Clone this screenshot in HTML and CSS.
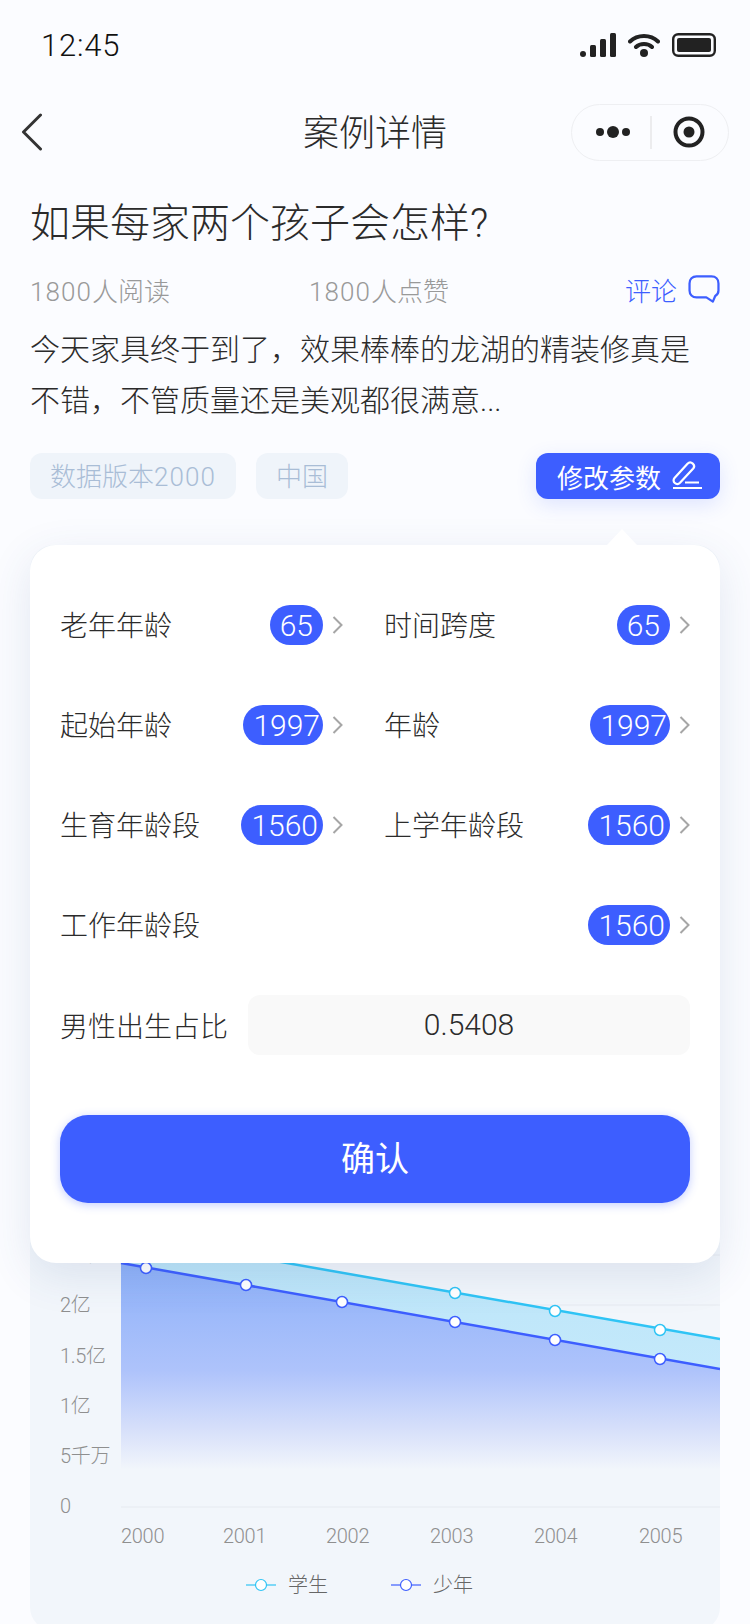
FILE: index.html
```html
<!DOCTYPE html>
<html lang="zh-CN">
<head>
    <meta charset="UTF-8">
    <meta name="viewport" content="width=device-width, initial-scale=1.0">
    <title>案例详情</title>
    <link rel="stylesheet" href="styles.css">
</head>
<body>
    <div class="page">
        <div class="status-bar">
            <span class="time">12:45</span>
            <div class="status-icons">
                <svg width="36" height="24" viewBox="0 0 36 24">
                    <rect x="0" y="18" width="6" height="6" rx="3" fill="#222"/>
                    <rect x="10" y="12" width="6" height="12" rx="1.5" fill="#222"/>
                    <rect x="20" y="6" width="6" height="18" rx="1.5" fill="#222"/>
                    <rect x="30" y="0" width="6" height="24" rx="1.5" fill="#222"/>
                </svg>
                <svg width="32" height="24" viewBox="0 0 32 24">
                    <path d="M2 8.5C9.5 1 22.500 1 30 8.500M8 14C12 10 20 10 24 14" fill="none" stroke="#222" stroke-width="4" stroke-linecap="round"/>
                    <circle cx="16" cy="20" r="4" fill="#222"/>
                </svg>
                <svg width="44" height="24" viewBox="0 0 44 24">
                    <rect x="1.200" y="1.200" width="41.600" height="21.600" rx="5" fill="none" stroke="#222" stroke-width="2.400"/>
                    <rect x="5" y="5" width="34" height="14" rx="2" fill="#222"/>
                </svg>
            </div>
        </div>

        <div class="nav-bar">
            <svg class="back-icon" width="22" height="38" viewBox="0 0 22 38">
                <path d="M19.500 2L2.500 19L19.500 36" fill="none" stroke="#333" stroke-width="3" stroke-linecap="round" stroke-linejoin="round"/>
            </svg>
            <div class="nav-title">案例详情</div>
            <div class="capsule">
                <svg width="38" height="14" viewBox="0 0 38 14">
                    <circle cx="4" cy="7" r="4" fill="#222"/>
                    <circle cx="17" cy="7" r="6" fill="#222"/>
                    <circle cx="30" cy="7" r="4" fill="#222"/>
                </svg>
                <span class="capsule-line"></span>
                <svg width="32" height="32" viewBox="0 0 32 32">
                    <circle cx="16" cy="16" r="13.500" fill="none" stroke="#222" stroke-width="4"/>
                    <circle cx="16" cy="16" r="5.500" fill="#222"/>
                </svg>
            </div>
        </div>

        <div class="content">
            <h1 class="case-title">如果每家两个孩子会怎样?</h1>
            <div class="stats">
                <span class="stat"><span class="num">1800</span>人阅读</span>
                <span class="stat"><span class="num">1800</span>人点赞</span>
                <span class="comment">
                    评论
                    <svg width="32" height="28" viewBox="0 0 34 30">
                        <path d="M9 1.500H25C29.500 1.500 32.500 4.500 32.500 9V16.500C32.500 19 31.500 21 29 22.500L26.500 28.500L19.500 24H9C4.500 24 1.500 21 1.500 16.500V9C1.500 4.500 4.500 1.500 9 1.500Z" fill="none" stroke="#3d5eff" stroke-width="2.400" stroke-linejoin="round"/>
                    </svg>
                </span>
            </div>
            <p class="summary">今天家具终于到了，效果棒棒的龙湖的精装修真是不错，不管质量还是美观都很满意...</p>
            <div class="tag-row">
                <span class="tag">数据版本<span class="num">2000</span></span>
                <span class="tag">中国</span>
                <span class="edit-btn">
                    修改参数
                    <svg width="30" height="30" viewBox="0 0 30 30">
                        <path d="M2.500 17L15.500 2.800C17 1.200 19.200 1.200 20.800 2.600C22.400 4 22.400 6.200 21 7.800L8 21.800C6.500 23.300 4.300 23.300 2.800 22C1.300 20.700 1.200 18.500 2.500 17Z" fill="none" stroke="#fff" stroke-width="2.200" stroke-linejoin="round"/>
                        <path d="M13 21.500H27M1 27H30" fill="none" stroke="#fff" stroke-width="2.200"/>
                    </svg>
                </span>
            </div>
        </div>

        <div class="chart-card">
            <svg class="chart" width="690" height="340" viewBox="0 0 690 340">
                <defs>
                    <linearGradient id="fill-cyan" gradientUnits="userSpaceOnUse" x1="0" y1="43" x2="0" y2="150">
                        <stop offset="0" stop-color="#bce5f9"/>
                        <stop offset="1" stop-color="#c4e9fb"/>
                    </linearGradient>
                    <linearGradient id="fill-blue" gradientUnits="userSpaceOnUse" x1="0" y1="43" x2="0" y2="250">
                        <stop offset="0" stop-color="#8eb1f9"/>
                        <stop offset="0.520" stop-color="#aec3fb"/>
                        <stop offset="0.800" stop-color="#d6dffa"/>
                        <stop offset="1" stop-color="#f2f6fb"/>
                    </linearGradient>
                </defs>
                <path class="grid-line" d="M91 35H690M91 85H690M91 287H690"/>
                <path d="M91 14L690 119V149L91 43Z" fill="url(#fill-cyan)"/>
                <path d="M91 43L690 149V255H91Z" fill="url(#fill-blue)"/>
                <path d="M91 14L690 119" class="line-cyan"/>
                <path d="M91 43L690 149" class="line-blue"/>
                <g class="dot-cyan">
                    <circle cx="425" cy="73" r="5.500"/>
                    <circle cx="525" cy="91" r="5.500"/>
                    <circle cx="630" cy="110" r="5.500"/>
                </g>
                <g class="dot-blue">
                    <circle cx="116" cy="48" r="5.500"/>
                    <circle cx="216" cy="65" r="5.500"/>
                    <circle cx="312" cy="82" r="5.500"/>
                    <circle cx="425" cy="102" r="5.500"/>
                    <circle cx="525" cy="120" r="5.500"/>
                    <circle cx="630" cy="139" r="5.500"/>
                </g>
                <g class="axis-text">
                    <text x="30" y="42">2.5亿</text>
                    <text x="30" y="92">2亿</text>
                    <text x="30" y="143">1.5亿</text>
                    <text x="30" y="193">1亿</text>
                    <text x="30" y="243">5千万</text>
                    <text x="30" y="293">0</text>
                    <text x="91" y="323">2000</text>
                    <text x="193" y="323">2001</text>
                    <text x="296" y="323">2002</text>
                    <text x="400" y="323">2003</text>
                    <text x="504" y="323">2004</text>
                    <text x="609" y="323">2005</text>
                </g>
            </svg>
            <div class="legend">
                <span class="legend-item">
                    <svg width="30" height="14" viewBox="0 0 30 14">
                        <path d="M0 7H30" stroke="#2fc4f5" stroke-width="1.200"/>
                        <circle cx="15" cy="7" r="5.500" fill="#fff" stroke="#2fc4f5" stroke-width="1.200"/>
                    </svg>
                    学生
                </span>
                <span class="legend-item">
                    <svg width="30" height="14" viewBox="0 0 30 14">
                        <path d="M0 7H30" stroke="#3d5eff" stroke-width="1.200"/>
                        <circle cx="15" cy="7" r="5.500" fill="#fff" stroke="#3d5eff" stroke-width="1.200"/>
                    </svg>
                    少年
                </span>
            </div>
        </div>

        <!-- params popover, sits over the chart -->
        <div class="popover">
            <div class="param-grid">
                <div class="param"><span class="label">老年年龄</span><span class="value"><b class="pill">65</b><svg class="arrow" width="11" height="18" viewBox="0 0 11 18"><path d="M1.500 1L9.500 9L1.500 17"/></svg></span></div>
                <div class="param"><span class="label">时间跨度</span><span class="value"><b class="pill">65</b><svg class="arrow" width="11" height="18" viewBox="0 0 11 18"><path d="M1.500 1L9.500 9L1.500 17"/></svg></span></div>
                <div class="param"><span class="label">起始年龄</span><span class="value"><b class="pill pill-year">1997</b><svg class="arrow" width="11" height="18" viewBox="0 0 11 18"><path d="M1.500 1L9.500 9L1.500 17"/></svg></span></div>
                <div class="param"><span class="label">年龄</span><span class="value"><b class="pill pill-year">1997</b><svg class="arrow" width="11" height="18" viewBox="0 0 11 18"><path d="M1.500 1L9.500 9L1.500 17"/></svg></span></div>
                <div class="param"><span class="label">生育年龄段</span><span class="value"><b class="pill pill-range">1560</b><svg class="arrow" width="11" height="18" viewBox="0 0 11 18"><path d="M1.500 1L9.500 9L1.500 17"/></svg></span></div>
                <div class="param"><span class="label">上学年龄段</span><span class="value"><b class="pill pill-range">1560</b><svg class="arrow" width="11" height="18" viewBox="0 0 11 18"><path d="M1.500 1L9.500 9L1.500 17"/></svg></span></div>
                <div class="param param-wide"><span class="label">工作年龄段</span><span class="value"><b class="pill pill-range">1560</b><svg class="arrow" width="11" height="18" viewBox="0 0 11 18"><path d="M1.500 1L9.500 9L1.500 17"/></svg></span></div>
            </div>
            <div class="ratio-row">
                <span>男性出生占比</span>
                <div class="ratio-input">0.5408</div>
            </div>
            <div class="confirm-btn">确认</div>
        </div>
    </div>
</body>
</html>
```

FILE: styles.css
```css
* { box-sizing: border-box; }
body {
    margin: 0;
    font-family: Roboto, "Noto Sans CJK SC", sans-serif;
    font-weight: 300;
    color: #2b2b2b;
    background: #fbfcff;
}
.page {
    position: relative;
    width: 750px;
    height: 1624px;
    overflow: hidden;
}
.num { letter-spacing: 1.1px; }

.status-bar {
    height: 90px;
    padding: 0 34px 0 41px;
    display: flex;
    align-items: center;
    justify-content: space-between;
}
.time { font-size: 31px; font-weight: 300; letter-spacing: 0.8px; color: #111; }
.status-icons {
    display: flex;
    align-items: center;
    gap: 12px;
}

.nav-bar {
    height: 84px;
    padding: 0 21px 0 21px;
    display: grid;
    grid-template-columns: 1fr auto 1fr;
    align-items: center;
}
.nav-title { font-size: 36px; line-height: 50px; padding-top: 4px; }
.capsule {
    justify-self: end;
    width: 158px;
    height: 57px;
    border: 1px solid #eeeff2;
    border-radius: 29px;
    display: flex;
    align-items: center;
    padding-left: 24px;
}
.capsule-line {
    width: 2px;
    height: 33px;
    background: #ececee;
    margin: 0 21px 0 16px;
}

.content { padding: 22px 30px 0; }
.case-title {
    margin: 0;
    font-size: 40px;
    line-height: 56px;
    font-weight: 300;
}
.stats {
    margin-top: 22px;
    height: 30px;
    display: flex;
    align-items: center;
    font-size: 26px;
    color: #999;
}
.stat { width: 279px; }
.comment {
    margin-left: auto;
    display: flex;
    align-items: center;
    gap: 11px;
    color: #3d5eff;
}
.summary {
    margin: 20px 10px 0 0;
    font-size: 30px;
    line-height: 51px;
}
.tag-row {
    margin-top: 27px;
    display: flex;
    align-items: center;
    gap: 20px;
}
.tag {
    height: 46px;
    padding: 0 20px;
    border-radius: 12px;
    background: #eff4fa;
    color: #a9bdd6;
    font-size: 26px;
    line-height: 48px;
}
.edit-btn {
    margin-left: auto;
    height: 46px;
    width: 184px;
    padding-left: 21px;
    border-radius: 12px;
    background: #3d5eff;
    color: #fff;
    font-size: 26px;
    font-weight: 400;
    display: flex;
    align-items: center;
    gap: 11px;
    box-shadow: 0 6px 20px rgba(61, 94, 255, 0.15);
}

.chart-card {
    margin: 46px 30px 0;
    padding-top: 675px;
    height: 1086px;
    background: #f2f6fb;
    border-radius: 24px;
}
.chart { display: block; }
.grid-line { fill: none; stroke: #e6eaf0; stroke-width: 1; }
.line-cyan { fill: none; stroke: #2fc4f5; stroke-width: 2.500; }
.line-blue { fill: none; stroke: #3d5eff; stroke-width: 2.500; }
.dot-cyan circle { fill: #fff; stroke: #2fc4f5; stroke-width: 1.500; }
.dot-blue circle { fill: #fff; stroke: #3d5eff; stroke-width: 1.500; }
.axis-text text { font-size: 20px; font-weight: 300; letter-spacing: -0.3px; fill: #8f8f8f; }
.legend {
    margin-top: 13px;
    padding-left: 216px;
    display: flex;
    gap: 63px;
}
.legend-item {
    display: flex;
    align-items: center;
    gap: 12px;
    font-size: 20px;
    line-height: 24px;
    color: #666;
}

.popover {
    position: absolute;
    top: 545px;
    left: 30px;
    width: 690px;
    height: 718px;
    padding: 60px 30px;
    background: #fff;
    border-radius: 26px;
    font-size: 28px;
    box-shadow: 0 12px 44px rgba(50, 80, 140, 0.12);
}
.popover::before {
    content: "";
    position: absolute;
    top: -16px;
    left: 577px;
    border-left: 15px solid transparent;
    border-right: 15px solid transparent;
    border-bottom: 16px solid #fff;
}
.param-grid {
    display: grid;
    grid-template-columns: 283px 306px;
    column-gap: 41px;
    row-gap: 60px;
}
.param {
    height: 40px;
    display: flex;
    align-items: center;
    justify-content: space-between;
    line-height: 40px;
}
.label { padding-top: 4px; }
.param-wide { grid-column: 1 / 3; }
.value {
    display: flex;
    align-items: center;
    gap: 9px;
}
.pill {
    height: 40px;
    padding: 0 10px;
    border-radius: 20px;
    background: #3d5eff;
    color: #fff;
    font-size: 30px;
    font-weight: 300;
    line-height: 42px;
}
.pill-year { padding: 0 3px 0 10px; }
.pill-range { padding: 0 5px 0 10px; }
.arrow { fill: none; stroke: #a6a6a6; stroke-width: 2; }
.ratio-row {
    margin-top: 50px;
    display: flex;
    align-items: center;
    gap: 20px;
}
.ratio-input {
    flex: 1;
    height: 60px;
    border-radius: 12px;
    background: #f9f9f9;
    font-size: 30px;
    line-height: 60px;
    text-align: center;
}
.confirm-btn {
    margin-top: 60px;
    height: 88px;
    border-radius: 28px;
    background: #3d5eff;
    color: #fff;
    font-size: 34px;
    font-weight: 400;
    line-height: 88px;
    text-align: center;
    box-shadow: 0 2px 10px rgba(61, 94, 255, 0.3);
}
```
